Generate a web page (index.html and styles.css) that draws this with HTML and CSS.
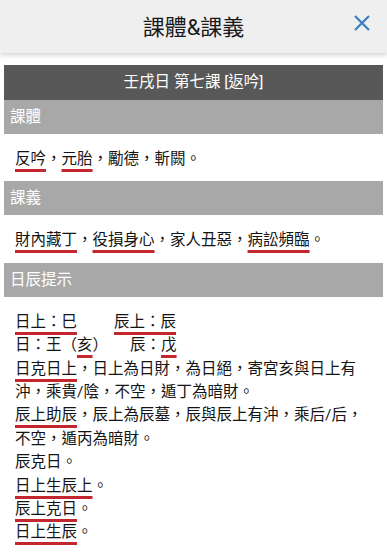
FILE: index.html
```html
<!DOCTYPE html>
<html lang="zh-TW">
<head>
    <meta charset="UTF-8">
    <meta name="viewport" content="width=device-width, initial-scale=1.0">
    <title>課體&課義</title>
    <link rel="stylesheet" href="styles.css">
</head>
<body>
    <div class="topbar">
        <h1>課體&amp;課義</h1>
        <button class="close" aria-label="關閉">
            <svg width="18" height="18" viewBox="0 0 18 18">
                <path d="M2 2 L16 16 M16 2 L2 16" stroke="#3b7fc0" stroke-width="2.2" fill="none"/>
            </svg>
        </button>
    </div>

    <div class="content">
        <div class="lesson-title">壬戌日 第七課 [返吟]</div>

        <div class="section-head">課體</div>
        <div class="section-body">
            <p><span class="mark">反吟</span>，<span class="mark">元胎</span>，勵德，斬闕。</p>
        </div>

        <div class="section-head">課義</div>
        <div class="section-body">
            <p><span class="mark">財內藏丁</span>，<span class="mark">役損身心</span>，家人丑惡，<span class="mark">病訟頻臨</span>。</p>
        </div>

        <div class="section-head">日辰提示</div>
        <div class="section-body tips">
            <p><span class="mark">日上：巳</span><span class="gap-a"></span><span class="mark">辰上：辰</span></p>
            <p>日：王（<span class="mark">亥</span>）<span class="gap-b"></span>辰：<span class="mark">戊</span></p>
            <p><span class="mark">日克日上</span>，日上為日財，為日絕，寄宮亥與日上有沖，乘貴/陰，不空，遁丁為暗財。</p>
            <p><span class="mark">辰上助辰</span>，辰上為辰墓，辰與辰上有沖，乘后/后，不空，遁丙為暗財。</p>
            <p>辰克日。</p>
            <p><span class="mark">日上生辰上</span>。</p>
            <p><span class="mark">辰上克日</span>。</p>
            <p><span class="mark">日上生辰</span>。</p>
        </div>
    </div>
</body>
</html>
```

FILE: styles.css
```css
body {
    margin: 0;
    background: #fff;
    font-family: Roboto, "Noto Sans CJK TC", "Noto Sans", sans-serif;
    color: #141414;
}

.topbar {
    position: relative;
    height: 53px;
    background: #efefef;
    box-shadow: 0 2px 5px rgba(0,0,0,0.18);
    display: flex;
    align-items: center;
    justify-content: center;
}

.topbar h1 {
    margin: 0;
    font-size: 22px;
    font-weight: 400;
    color: #1a1a1a;
    padding-bottom: 3px;
}

.close {
    position: absolute;
    right: 16px;
    top: 14px;
    background: none;
    border: none;
    padding: 0;
    width: 18px;
    height: 18px;
}

.content {
    margin: 12px 4px 0;
}

.lesson-title {
    background: #585858;
    color: #fff;
    height: 35px;
    line-height: 35px;
    text-align: center;
    font-size: 15.5px;
}

.section-head {
    background: #a8a8a8;
    color: #fff;
    height: 34px;
    line-height: 34px;
    padding-left: 6px;
    font-size: 15.5px;
}

.section-body {
    padding: 14px 11px 10px;
    font-size: 15.5px;
    line-height: 23.4px;
}

.section-body p {
    margin: 0;
}

.mark {
    text-decoration: underline;
    text-decoration-color: #c4262e;
    text-decoration-thickness: 3px;
    text-underline-offset: 5px;
    text-decoration-skip-ink: none;
}

.gap-a {
    display: inline-block;
    width: 37px;
}

.gap-b {
    display: inline-block;
    width: 22px;
}
```
